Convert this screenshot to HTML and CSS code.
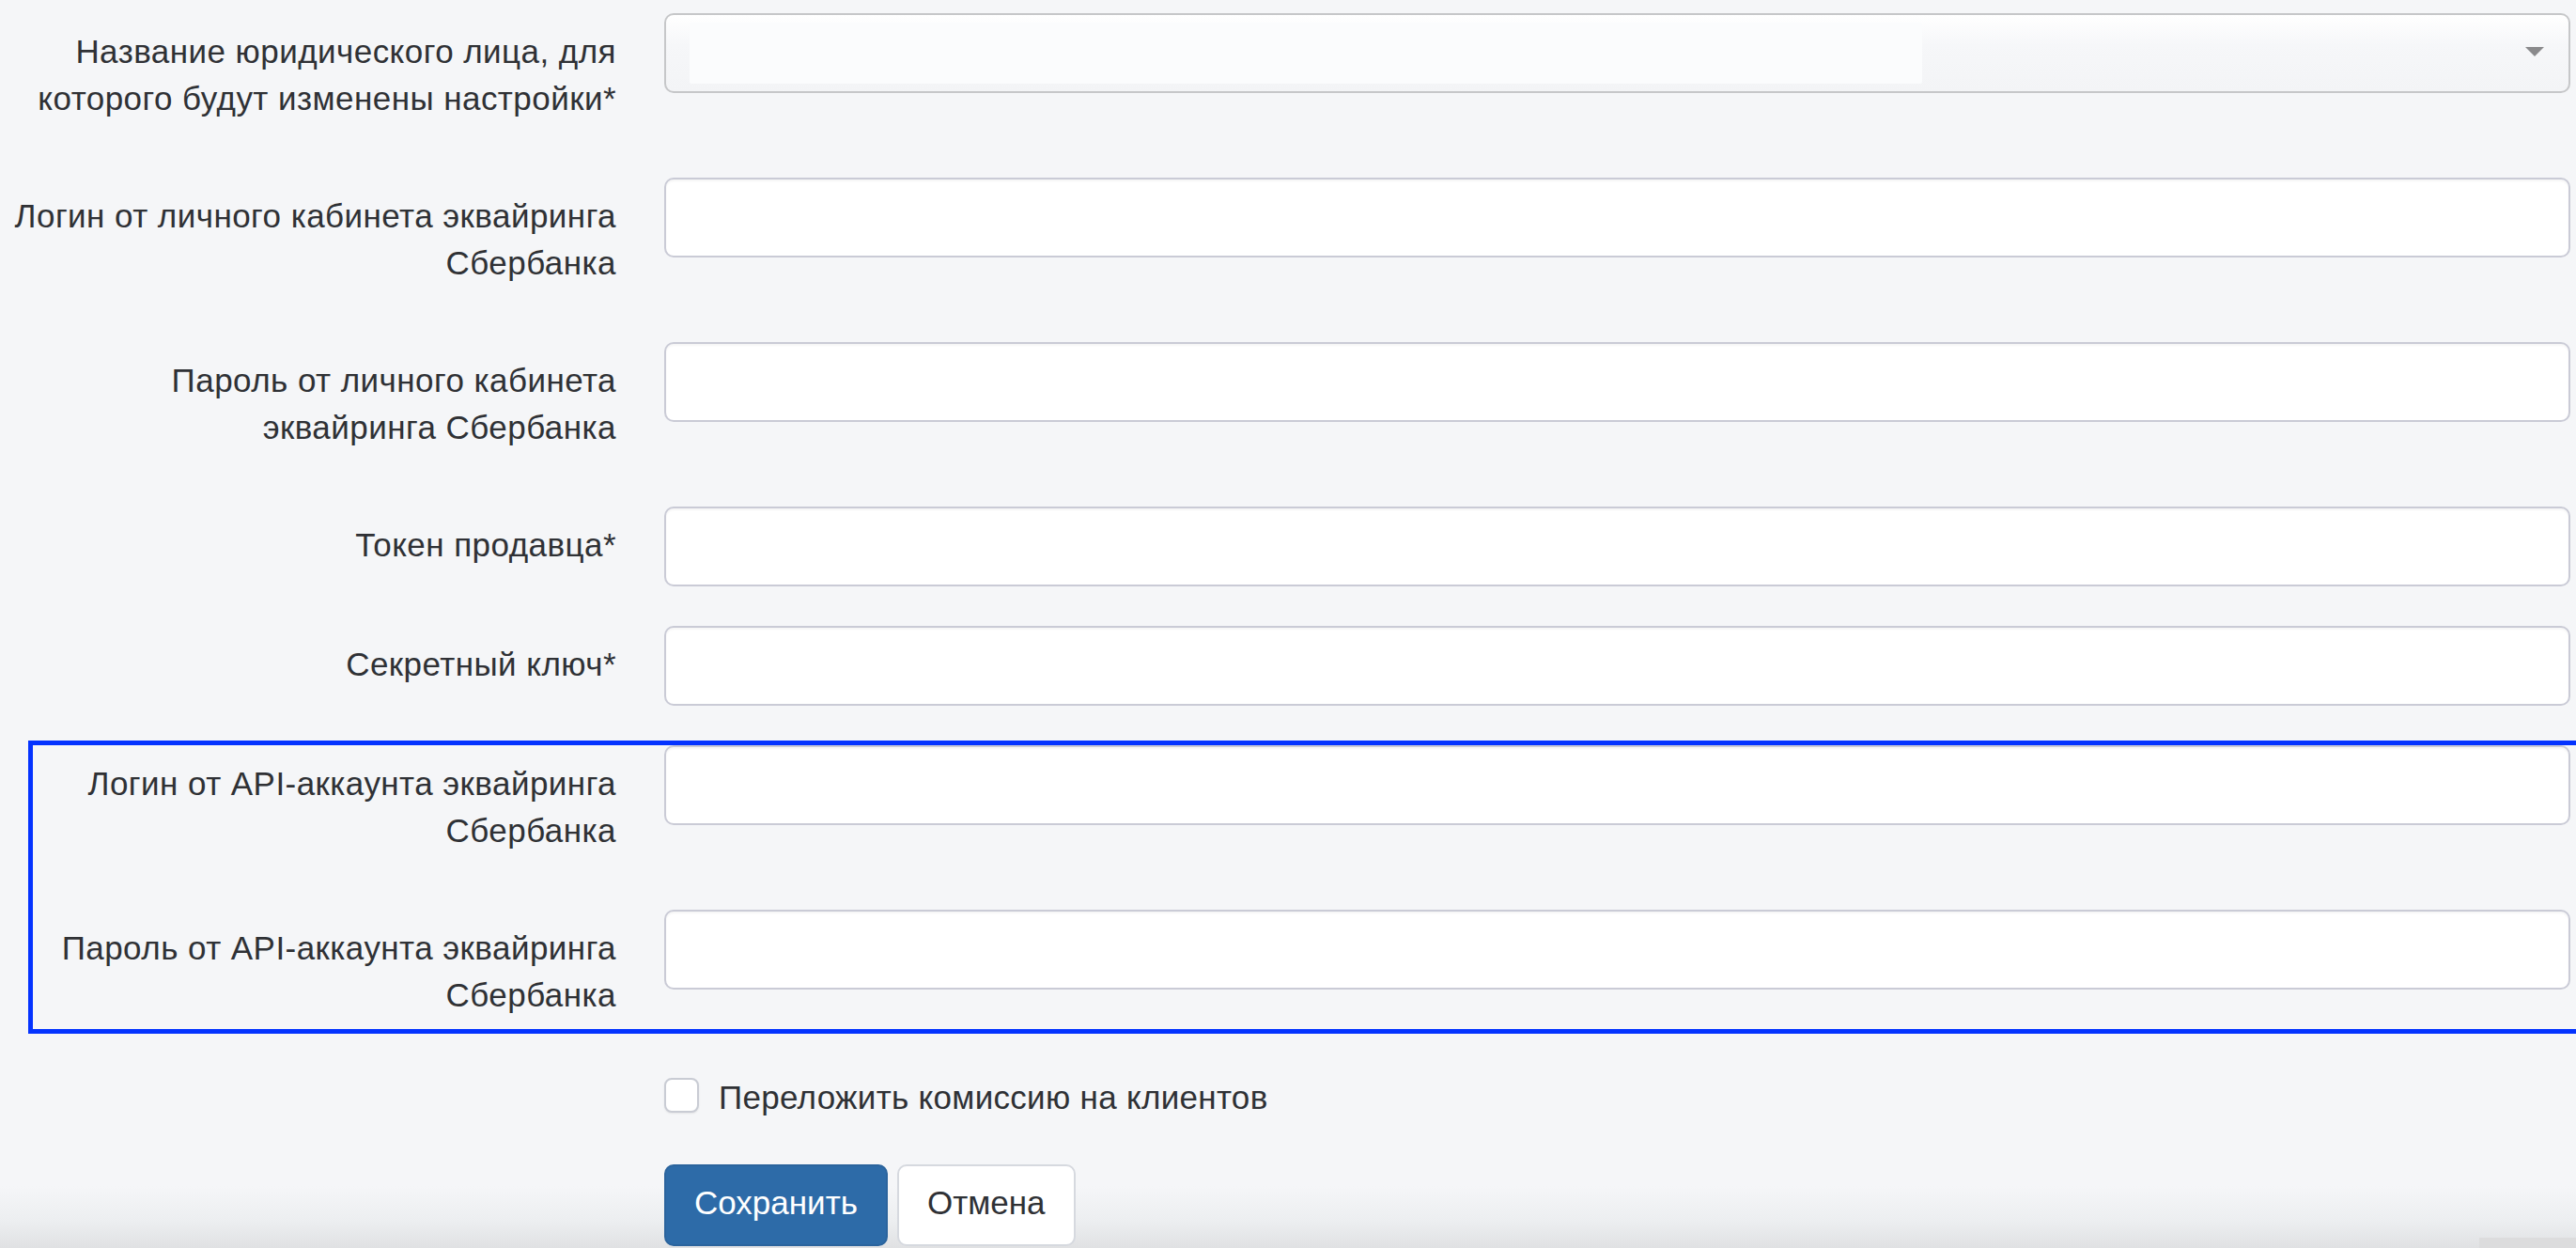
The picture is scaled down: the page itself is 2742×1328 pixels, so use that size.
FILE: index.html
```html
<!DOCTYPE html>
<html lang="ru">
<head>
<meta charset="utf-8">
<title>Настройки эквайринга</title>
<link rel="stylesheet" href="styles.css">
</head>
<body>
<form class="form">
  <div class="row">
    <label class="lbl">Название юридического лица, для<br>которого будут изменены настройки*</label>
    <div class="ctl">
      <div class="select">
        <span class="select-value"></span>
        <span class="caret"></span>
      </div>
    </div>
  </div>
  <div class="row">
    <label class="lbl">Логин от личного кабинета эквайринга<br>Сбербанка</label>
    <div class="ctl"><input class="input" type="text"></div>
  </div>
  <div class="row">
    <label class="lbl">Пароль от личного кабинета<br>эквайринга Сбербанка</label>
    <div class="ctl"><input class="input" type="password"></div>
  </div>
  <div class="row">
    <label class="lbl">Токен продавца*</label>
    <div class="ctl"><input class="input" type="text"></div>
  </div>
  <div class="row">
    <label class="lbl">Секретный ключ*</label>
    <div class="ctl"><input class="input" type="text"></div>
  </div>
  <div class="highlight">
    <div class="row">
      <label class="lbl">Логин от API-аккаунта эквайринга<br>Сбербанка</label>
      <div class="ctl"><input class="input" type="text"></div>
    </div>
    <div class="row">
      <label class="lbl">Пароль от API-аккаунта эквайринга<br>Сбербанка</label>
      <div class="ctl"><input class="input" type="password"></div>
    </div>
  </div>
  <div class="row check-row">
    <div></div>
    <label class="check">
      <span class="box"></span>
      <span class="check-text">Переложить комиссию на клиентов</span>
    </label>
  </div>
  <div class="row btn-row">
    <div></div>
    <div class="btns">
      <button type="button" class="btn btn-primary">Сохранить</button>
      <button type="button" class="btn btn-default">Отмена</button>
    </div>
  </div>
</form>
<div class="corner-tab"></div>
</body>
</html>
```

FILE: styles.css
```css
html, body {
  margin: 0;
  padding: 0;
  height: 1328px;
  overflow: hidden;
}

body {
  font-family: "Liberation Sans", Arial, sans-serif;
  font-size: 35px;
  line-height: 50px;
  color: #2f3135;
  background: linear-gradient(to bottom, #f5f6f8 0, #f5f6f8 1262px, #eceef0 1300px, #e0e1e3 1328px);
  position: relative;
}

.form {
  padding-top: 14px;
}

.row {
  display: grid;
  grid-template-columns: 656px 1fr;
  column-gap: 51px;
  padding-right: 6px;
  margin-bottom: 42px;
}

.lbl {
  text-align: right;
  white-space: nowrap;
  letter-spacing: 0.45px;
  padding: 16px 0 17px;
}

.ctl {
  min-width: 0;
}

.input {
  display: block;
  width: 100%;
  height: 85px;
  box-sizing: border-box;
  border: 2px solid #cacbd6;
  border-radius: 10px;
  background: #fff;
  box-shadow: inset 0 2px 2px rgba(0, 0, 0, 0.04);
  font: inherit;
  padding: 0 30px;
  outline: none;
}

.select {
  height: 85px;
  box-sizing: border-box;
  border: 2px solid #c6c7c9;
  border-radius: 10px;
  background: linear-gradient(to bottom, #ffffff 0%, #f6f7f9 40%, #f3f4f6 100%);
  display: flex;
  align-items: center;
  padding: 0 26px 0 25px;
}

.select-value {
  display: block;
  height: 65px;
  width: 1312px;
  background: #fbfcfd;
  border-radius: 2px;
}

.caret {
  margin-left: auto;
  width: 0;
  height: 0;
  border-left: 10px solid transparent;
  border-right: 10px solid transparent;
  border-top: 10px solid #8a8a8c;
  margin-top: -4px;
}

.highlight {
  position: relative;
}

.highlight::before {
  content: "";
  position: absolute;
  top: -5px;
  left: 30px;
  right: -30px;
  bottom: 1px;
  border: 5px solid #0433ff;
  pointer-events: none;
}

.check-row {
  margin-bottom: 46px;
}

.check {
  display: flex;
  align-items: flex-start;
  gap: 21px;
}

.check-text {
  letter-spacing: 0.3px;
}

.box {
  width: 37px;
  height: 37px;
  box-sizing: border-box;
  margin-top: 4px;
  border: 2px solid #c9ccd4;
  border-radius: 8px;
  background: #fff;
  box-shadow: 0 1px 2px rgba(0, 0, 0, 0.08);
}

.btn-row {
  margin-bottom: 0;
}

.btns {
  display: flex;
  gap: 10px;
}

.btn {
  font: inherit;
  line-height: 50px;
  height: 87px;
  box-sizing: border-box;
  padding: 14px 30px 19px;
  border-radius: 10px;
  border: 2px solid transparent;
  cursor: pointer;
}

.btn-primary {
  background: #2d6ba8;
  border-color: #2b649d;
  color: #fff;
}

.btn-default {
  background: #fff;
  border-color: #d6d9df;
  color: #2f3135;
}

.corner-tab {
  position: absolute;
  right: 0;
  bottom: 0;
  width: 103px;
  height: 11px;
  background: #dcdcdd;
}
```
